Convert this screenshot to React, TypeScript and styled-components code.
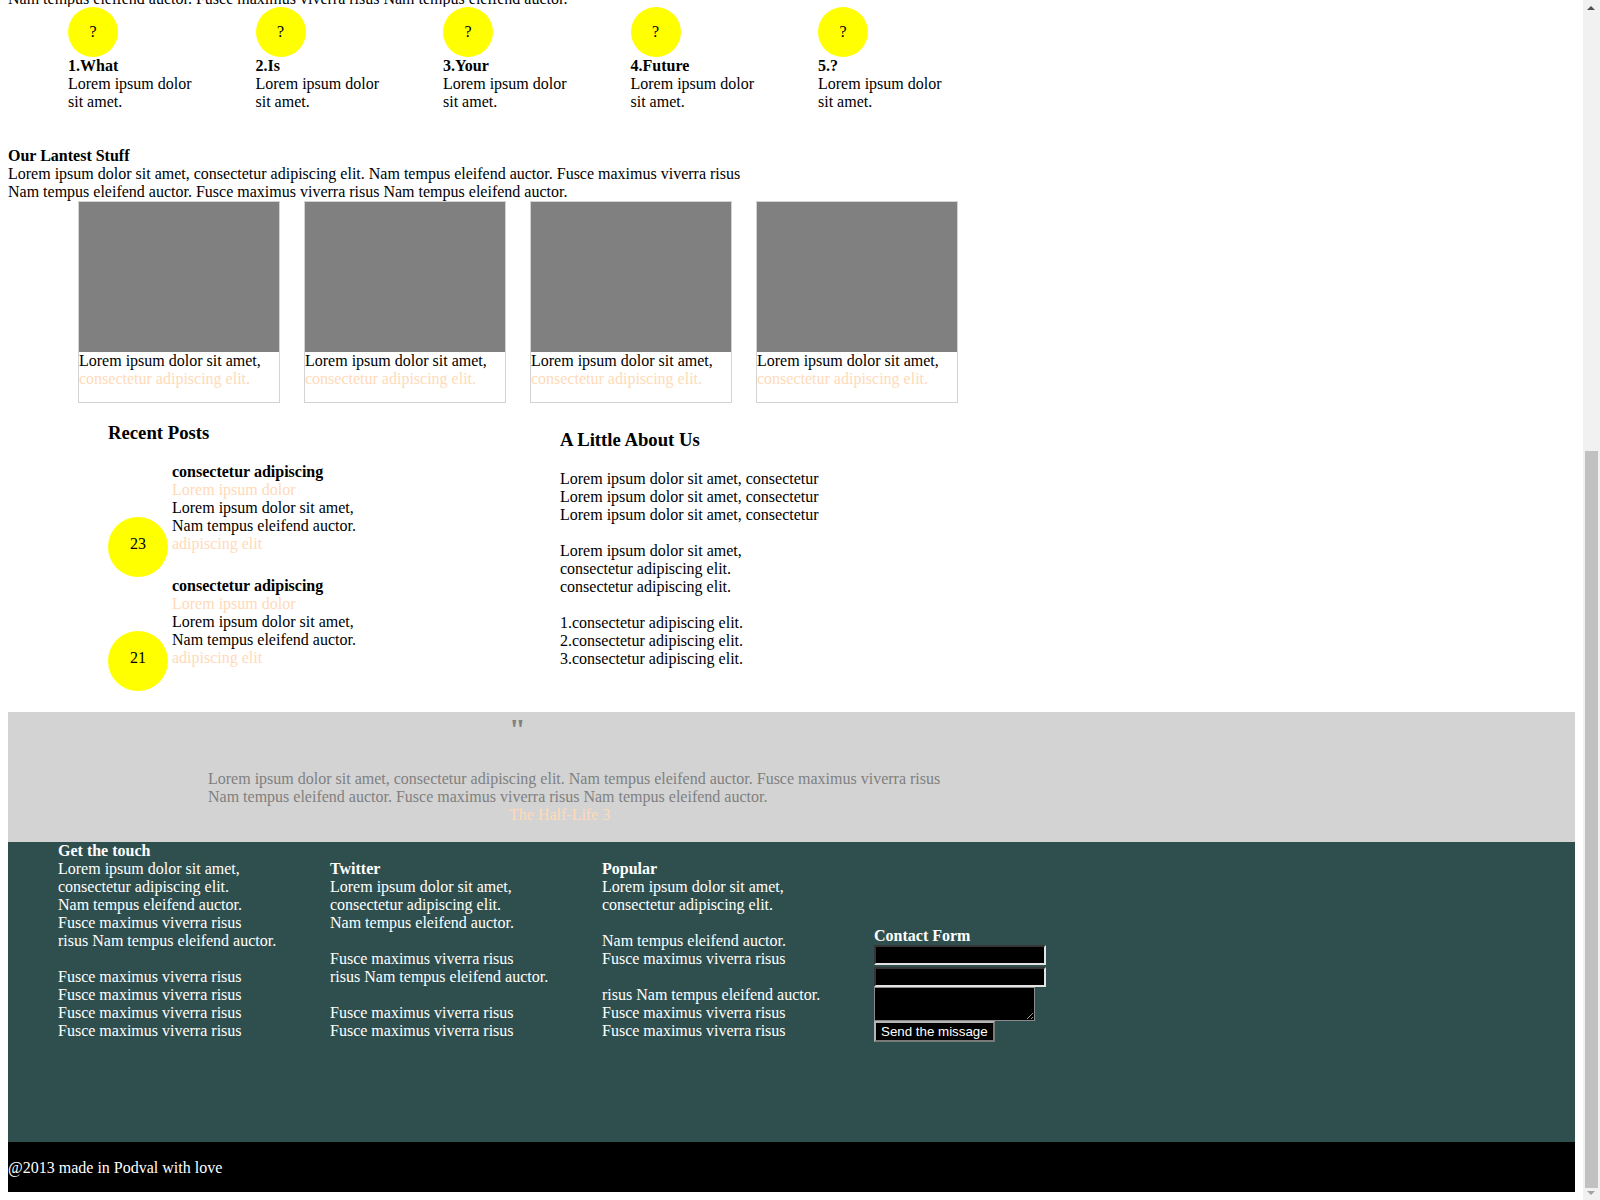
import React from "react";
import styled, { createGlobalStyle } from "styled-components";

const GlobalStyle = createGlobalStyle`
  body {
    margin: 0 25px 8px 8px;
    font-family: "Liberation Serif", "Times New Roman", serif;
    font-size: 16px;
    line-height: 18px;
    color: #000;
    background: #fff;
  }
`;

const Line = styled.div<{ $tone?: "peach" | "gray" }>`
  display: block;
  min-height: 18px;
  color: ${(p) => (p.$tone === "peach" ? "#ffdab9" : p.$tone === "gray" ? "#808080" : "inherit")};
`;

/* the page is shown scrolled: only the bottom of this line peeks in */
const CutLine = styled.div`
  height: 7px;
  overflow: hidden;
  display: flex;
  flex-direction: column;
  justify-content: flex-end;
`;

const CutLineText = styled.div`
  flex-shrink: 0;
  line-height: 18px;
  margin-bottom: -1px;
`;

const Bold = styled.div`
  font-weight: bold;
`;

/* ---------- fake browser scrollbar (overlay) ---------- */
const ScrollTrack = styled.div`
  position: fixed;
  top: 0;
  right: 0;
  width: 17px;
  height: 100vh;
  background: #f1f1f1;
`;

const ScrollThumb = styled.div`
  position: absolute;
  left: 2px;
  right: 2px;
  top: 451px;
  height: 737px;
  background: #c1c1c1;
`;

const ScrollArrow = styled.div<{ $down?: boolean }>`
  position: absolute;
  left: 4px;
  width: 0;
  height: 0;
  border-left: 4.5px solid transparent;
  border-right: 4.5px solid transparent;
  ${(p) =>
    p.$down
      ? "bottom: 5px; border-top: 4px solid #a3a3a3;"
      : "top: 6px; border-bottom: 4px solid #505050;"}
`;

/* ---------- steps row ---------- */
const StepsRow = styled.div`
  display: flex;
  gap: 57.5px;
  padding-left: 60px;
  margin-bottom: 36px;
`;

const Step = styled.div`
  width: 130px;
`;

const StepCircle = styled.div`
  width: 50px;
  height: 50px;
  border-radius: 50%;
  background: #ffff00;
  display: flex;
  align-items: center;
  justify-content: center;
`;

/* ---------- latest stuff ---------- */
const Cards = styled.div`
  display: flex;
  gap: 24px;
  padding-left: 70px;
`;

const Card = styled.div`
  width: 200px;
  height: 200px;
  border: 1px solid #d3d3d3;
`;

const CardImage = styled.div`
  height: 150px;
  background: #808080;
`;

/* ---------- posts / about ---------- */
const InfoSection = styled.div`
  display: flex;
  padding: 19px 0 21px 100px;
`;

const RecentCol = styled.div`
  width: 452px;
`;

const AboutCol = styled.div`
  padding-top: 6.5px;
`;

const SectionHeading = styled.h3`
  font-size: 18.72px;
  line-height: 22px;
  font-weight: bold;
  margin: 0 0 19px;
`;

const PostRow = styled.div`
  display: flex;
  gap: 4px;
`;

const DateCircle = styled.div`
  flex-shrink: 0;
  width: 60px;
  height: 60px;
  margin-top: 54px;
  box-sizing: border-box;
  padding-top: 18px;
  border-radius: 50%;
  background: #ffff00;
  text-align: center;
`;

/* ---------- quote ---------- */
const QuoteSection = styled.div`
  background: #d3d3d3;
  padding: 0 0 18px 200px;
  color: #808080;
`;

const QuoteMark = styled.div`
  margin-left: 301px;
  font-size: 30px;
  font-weight: bold;
  line-height: 34px;
  height: 40px;
`;

const QuoteText = styled.p`
  margin: 18px 0 0;
  max-width: 745px;
`;

const QuoteAuthor = styled.div`
  margin-left: 301px;
  color: #ffdab9;
`;

/* ---------- footer ---------- */
const Footer = styled.div`
  background: #2f4f4f;
  color: #fff;
  height: 300px;
  box-sizing: border-box;
  padding-left: 50px;
`;

const FooterRow = styled.div`
  display: flex;
  align-items: flex-end;
`;

const FooterCol = styled.div`
  width: 272px;
`;

const ContactForm = styled.form`
  display: flex;
  flex-direction: column;
  align-items: flex-start;
  margin: 0 0 -2px;
`;

const TextInput = styled.input<{ $gap?: number }>`
  box-sizing: border-box;
  width: 172px;
  height: 20px;
  margin: 0 0 ${(p) => p.$gap ?? 0}px;
  padding: 0 2px;
  background: #000;
  color: #fff;
  border: 2px inset #b0b0b0;
  border-color: #8a8a8a #e3e3e3 #e3e3e3 #8a8a8a;
  outline: none;
`;

const TextArea = styled.textarea`
  box-sizing: border-box;
  width: 161px;
  height: 34px;
  margin: 0;
  padding: 2px;
  background: #000;
  color: #fff;
  border: 1px solid #8a8a8a;
  outline: none;
`;

const SendButton = styled.button`
  box-sizing: border-box;
  width: 121px;
  height: 21px;
  margin: 0;
  padding: 0 3px 1px 5px;
  background: #000;
  color: #fff;
  font-family: "Liberation Sans", Arial, sans-serif;
  font-size: 13.33px;
  line-height: 15px;
  white-space: nowrap;
  text-align: left;
  border: 2px solid #8f8f8f;
  border-color: #b5b5b5 #7a7a7a #7a7a7a #b5b5b5;
`;

const BottomBar = styled.div`
  background: #000;
  color: #fff;
  height: 50px;
  box-sizing: border-box;
  padding: 17px 0 15px;
`;

const steps = ["1.What", "2.Is", "3.Your", "4.Future", "5.?"];
const posts = ["23", "21"];

const getTouch = [
  "Lorem ipsum dolor sit amet,",
  "consectetur adipiscing elit.",
  "Nam tempus eleifend auctor.",
  "Fusce maximus viverra risus",
  "risus Nam tempus eleifend auctor.",
  "",
  "Fusce maximus viverra risus",
  "Fusce maximus viverra risus",
  "Fusce maximus viverra risus",
  "Fusce maximus viverra risus",
];
const twitter = [
  "Lorem ipsum dolor sit amet,",
  "consectetur adipiscing elit.",
  "Nam tempus eleifend auctor.",
  "",
  "Fusce maximus viverra risus",
  "risus Nam tempus eleifend auctor.",
  "",
  "Fusce maximus viverra risus",
  "Fusce maximus viverra risus",
];
const popular = [
  "Lorem ipsum dolor sit amet,",
  "consectetur adipiscing elit.",
  "",
  "Nam tempus eleifend auctor.",
  "Fusce maximus viverra risus",
  "",
  "risus Nam tempus eleifend auctor.",
  "Fusce maximus viverra risus",
  "Fusce maximus viverra risus",
];
const about = [
  "Lorem ipsum dolor sit amet, consectetur",
  "Lorem ipsum dolor sit amet, consectetur",
  "Lorem ipsum dolor sit amet, consectetur",
  "",
  "Lorem ipsum dolor sit amet,",
  "consectetur adipiscing elit.",
  "consectetur adipiscing elit.",
  "",
  "1.consectetur adipiscing elit.",
  "2.consectetur adipiscing elit.",
  "3.consectetur adipiscing elit.",
];

const Lines = ({ items }: { items: string[] }) => (
  <>
    {items.map((t, i) => (
      <Line key={i}>{t || "\u00a0"}</Line>
    ))}
  </>
);

export default function App() {
  return (
    <>
      <GlobalStyle />
      <ScrollTrack>
        <ScrollArrow />
        <ScrollThumb />
        <ScrollArrow $down />
      </ScrollTrack>
      <CutLine>
        <CutLineText>Nam tempus eleifend auctor. Fusce maximus viverra risus Nam tempus eleifend auctor.</CutLineText>
      </CutLine>

      <StepsRow>
        {steps.map((s) => (
          <Step key={s}>
            <StepCircle>?</StepCircle>
            <Bold>{s}</Bold>
            <Line>Lorem ipsum dolor sit amet.</Line>
          </Step>
        ))}
      </StepsRow>

      <Bold>Our Lantest Stuff</Bold>
      <Line>Lorem ipsum dolor sit amet, consectetur adipiscing elit. Nam tempus eleifend auctor. Fusce maximus viverra risus</Line>
      <Line>Nam tempus eleifend auctor. Fusce maximus viverra risus Nam tempus eleifend auctor.</Line>

      <Cards>
        {[0, 1, 2, 3].map((i) => (
          <Card key={i}>
            <CardImage />
            <Line>Lorem ipsum dolor sit amet,</Line>
            <Line $tone="peach">consectetur adipiscing elit.</Line>
          </Card>
        ))}
      </Cards>

      <InfoSection>
        <RecentCol>
          <SectionHeading>Recent Posts</SectionHeading>
          {posts.map((d) => (
            <PostRow key={d}>
              <DateCircle>{d}</DateCircle>
              <div>
                <Bold>consectetur adipiscing</Bold>
                <Line $tone="peach">Lorem ipsum dolor</Line>
                <Line>Lorem ipsum dolor sit amet,</Line>
                <Line>Nam tempus eleifend auctor.</Line>
                <Line $tone="peach">adipiscing elit</Line>
              </div>
            </PostRow>
          ))}
        </RecentCol>
        <AboutCol>
          <SectionHeading>A Little About Us</SectionHeading>
          <Lines items={about} />
        </AboutCol>
      </InfoSection>

      <QuoteSection>
        <QuoteMark>"</QuoteMark>
        <QuoteText>
          Lorem ipsum dolor sit amet, consectetur adipiscing elit. Nam tempus eleifend auctor. Fusce maximus viverra risus Nam tempus eleifend auctor. Fusce maximus viverra risus Nam tempus eleifend auctor.
        </QuoteText>
        <QuoteAuthor>The Half-Life 3</QuoteAuthor>
      </QuoteSection>

      <Footer>
        <FooterRow>
          <FooterCol>
            <Bold>Get the touch</Bold>
            <Lines items={getTouch} />
          </FooterCol>
          <FooterCol>
            <Bold>Twitter</Bold>
            <Lines items={twitter} />
          </FooterCol>
          <FooterCol>
            <Bold>Popular</Bold>
            <Lines items={popular} />
          </FooterCol>
          <FooterCol>
            <ContactForm onSubmit={(e) => e.preventDefault()}>
              <Bold>Contact Form</Bold>
              <TextInput type="text" $gap={2} />
              <TextInput type="text" />
              <TextArea />
              <SendButton type="submit">Send the missage</SendButton>
            </ContactForm>
          </FooterCol>
        </FooterRow>
      </Footer>

      <BottomBar>@2013 made in Podval with love</BottomBar>
    </>
  );
}
